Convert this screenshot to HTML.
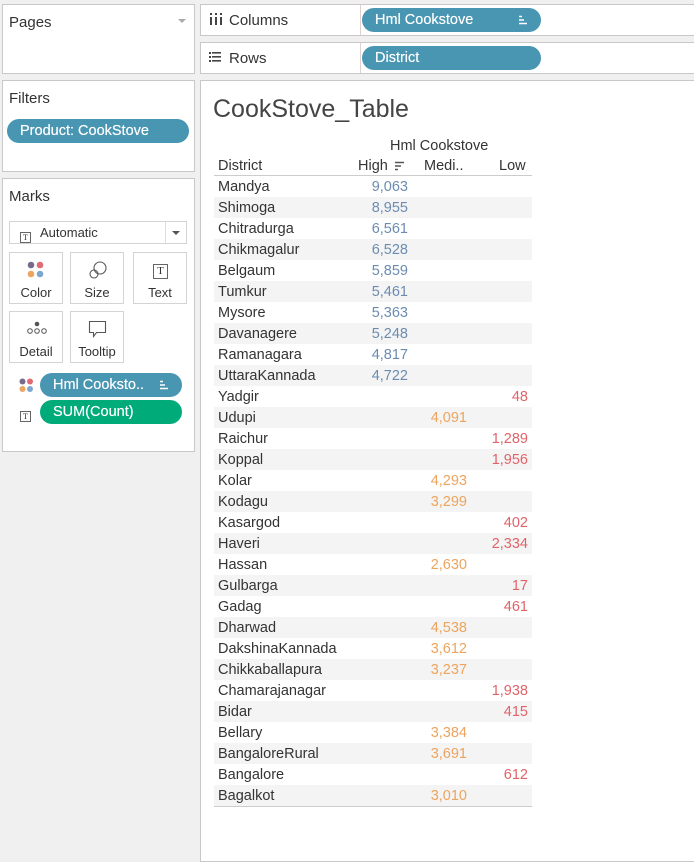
<!DOCTYPE html>
<html><head><meta charset="utf-8"><style>
*{box-sizing:border-box;margin:0;padding:0}
body{width:694px;height:860px;background:#f0f0f0;position:relative;font-family:"Liberation Sans",sans-serif;color:#333;overflow:hidden}
.box{position:absolute;background:#fff;border:1px solid #c8c8c8}
.t{position:absolute;font-size:14px;color:#333;white-space:nowrap}
.pill{position:absolute;height:24px;border-radius:12px;background:#4996b2;color:#fff;font-size:14.5px;line-height:25px;padding-left:13px;white-space:nowrap;text-shadow:0 0 0.4px #fff}
.btn{position:absolute;width:54px;height:52px;border:1px solid #d4d4d4;background:#fff;font-size:13px;text-align:center}
.btn > span{position:absolute;left:0;right:0;bottom:3px}
.row{position:absolute;left:214px;width:318px;height:21px;font-size:14.5px;line-height:22px}
.row .d{position:absolute;left:4px;color:#333}
.row .n{position:absolute;text-align:right}
.h{right:124px;color:#6b8cb0}.m{right:65px;color:#eda45e}.l{right:4px;color:#e0636a}
.sh{background:#f4f4f4}
.ti{display:inline-block;width:11px;height:11px;border:1px solid #666;font-size:8px;line-height:9px;text-align:center;font-family:"Liberation Serif",serif}
</style></head><body>
<div class="box" style="left:2px;top:4px;width:193px;height:70px"></div>
<div class="t" style="left:9px;top:14px;font-size:15px">Pages</div>
<div style="position:absolute;left:178px;top:19px;border-left:4px solid transparent;border-right:4px solid transparent;border-top:4px solid #aaa"></div>
<div class="box" style="left:2px;top:80px;width:193px;height:92px"></div>
<div class="t" style="left:9px;top:90px;font-size:15px">Filters</div>
<div class="pill" style="left:7px;top:119px;width:182px">Product: CookStove</div>
<div class="box" style="left:2px;top:178px;width:193px;height:274px"></div>
<div class="t" style="left:9px;top:188px;font-size:15px">Marks</div>
<div style="position:absolute;left:9px;top:221px;width:178px;height:23px;border:1px solid #d4d4d4;background:#fff"></div>
<div style="position:absolute;left:20px;top:227px"><span class="ti">T</span></div>
<div class="t" style="left:40px;top:225px;font-size:13px">Automatic</div>
<div style="position:absolute;left:165px;top:222px;width:1px;height:21px;background:#ddd"></div>
<div style="position:absolute;left:172px;top:231px;border-left:4px solid transparent;border-right:4px solid transparent;border-top:4px solid #555"></div>
<div class="btn" style="left:9px;top:252px"><svg style="position:absolute;left:17px;top:8px" width="18" height="18"><circle cx="4" cy="4" r="3.3" fill="#7a6a8a"/><circle cx="13" cy="4" r="3.3" fill="#e06b76"/><circle cx="4" cy="13" r="3.3" fill="#eda45e"/><circle cx="13" cy="13" r="3.3" fill="#7ea7d0"/></svg><span>Color</span></div>
<div class="btn" style="left:70px;top:252px"><svg style="position:absolute;left:17px;top:7px" width="20" height="20" fill="none" stroke="#555" stroke-width="1.1"><circle cx="12" cy="8" r="6"/><circle cx="6" cy="14" r="4"/></svg><span>Size</span></div>
<div class="btn" style="left:133px;top:252px"><div style="position:absolute;left:19px;top:9px"><div class="ti" style="width:15px;height:15px;line-height:13px;font-size:11px">T</div></div><span>Text</span></div>
<div class="btn" style="left:9px;top:311px"><svg style="position:absolute;left:15px;top:9px" width="24" height="14" fill="none" stroke="#555"><circle cx="12" cy="3" r="2.3" fill="#555" stroke="none"/><circle cx="5" cy="10" r="2.3"/><circle cx="12" cy="10" r="2.3"/><circle cx="19" cy="10" r="2.3"/></svg><span>Detail</span></div>
<div class="btn" style="left:70px;top:311px"><svg style="position:absolute;left:17px;top:8px" width="20" height="18" fill="none" stroke="#555" stroke-width="1.1"><path d="M1.5 1.5h16v11h-9l-3 4v-4h-4z"/></svg><span>Tooltip</span></div>
<svg style="position:absolute;left:19px;top:378px" width="15" height="15"><circle cx="3.5" cy="3.5" r="3" fill="#7a6a8a"/><circle cx="11" cy="3.5" r="3" fill="#e06b76"/><circle cx="3.5" cy="11" r="3" fill="#eda45e"/><circle cx="11" cy="11" r="3" fill="#7ea7d0"/></svg>
<div class="pill" style="left:40px;top:373px;width:142px">Hml Cooksto..<svg style="position:absolute;right:13px;top:7px" width="10" height="10" stroke="#fff" stroke-width="1.4"><path d="M1 1.5h3M1 5h5M1 8.5h8"/></svg></div>
<div style="position:absolute;left:20px;top:406px"><span class="ti">T</span></div>
<div class="pill" style="left:40px;top:400px;width:142px;background:#00ab7a">SUM(Count)</div>

<div class="box" style="left:200px;top:4px;width:500px;height:32px"></div>
<div style="position:absolute;left:360px;top:5px;width:1px;height:30px;background:#e0d0d0"></div>
<svg style="position:absolute;left:210px;top:13px" width="12" height="12" fill="#444"><rect x="0" y="4" width="2" height="8"/><rect x="5" y="4" width="2" height="8"/><rect x="10" y="4" width="2" height="8"/><rect x="0" y="0" width="2" height="2"/><rect x="5" y="0" width="2" height="2"/><rect x="10" y="0" width="2" height="2"/></svg>
<div class="t" style="left:229px;top:12px;font-size:15px">Columns</div>
<div class="pill" style="left:362px;top:8px;width:179px">Hml Cookstove<svg style="position:absolute;right:13px;top:7px" width="10" height="10" stroke="#fff" stroke-width="1.4"><path d="M1 1.5h3M1 5h5M1 8.5h8"/></svg></div>
<div class="box" style="left:200px;top:42px;width:500px;height:32px"></div>
<div style="position:absolute;left:360px;top:43px;width:1px;height:30px;background:#e0d0d0"></div>
<svg style="position:absolute;left:209px;top:52px" width="12" height="10" fill="#444"><rect x="0" y="0" width="2" height="2"/><rect x="0" y="4" width="2" height="2"/><rect x="0" y="8" width="2" height="2"/><rect x="3" y="0" width="9" height="1.6"/><rect x="3" y="4" width="9" height="1.6"/><rect x="3" y="8" width="9" height="1.6"/></svg>
<div class="t" style="left:229px;top:50px;font-size:15px">Rows</div>
<div class="pill" style="left:362px;top:46px;width:179px">District</div>

<div class="box" style="left:200px;top:80px;width:500px;height:782px"></div>
<div class="t" style="left:213px;top:95px;font-size:25px;color:#444">CookStove_Table</div>
<div class="t" style="left:390px;top:138px;font-size:14.5px">Hml Cookstove</div>
<div class="t" style="left:218px;top:158px;font-size:14.5px">District</div>
<div class="t" style="left:358px;top:158px;font-size:14.5px">High</div>
<svg style="position:absolute;left:395px;top:161px" width="10" height="10" stroke="#555" stroke-width="1.4"><path d="M0 1.5h9M0 5h6M0 8.5h3"/></svg>
<div class="t" style="left:424px;top:158px;font-size:14.5px">Medi..</div>
<div class="t" style="left:499px;top:158px;font-size:14.5px">Low</div>
<div style="position:absolute;left:214px;top:175px;width:318px;height:1px;background:#ccc"></div>
<div class="row" style="top:176px"><span class="d">Mandya</span><span class="n h">9,063</span></div>
<div class="row sh" style="top:197px"><span class="d">Shimoga</span><span class="n h">8,955</span></div>
<div class="row" style="top:218px"><span class="d">Chitradurga</span><span class="n h">6,561</span></div>
<div class="row sh" style="top:239px"><span class="d">Chikmagalur</span><span class="n h">6,528</span></div>
<div class="row" style="top:260px"><span class="d">Belgaum</span><span class="n h">5,859</span></div>
<div class="row sh" style="top:281px"><span class="d">Tumkur</span><span class="n h">5,461</span></div>
<div class="row" style="top:302px"><span class="d">Mysore</span><span class="n h">5,363</span></div>
<div class="row sh" style="top:323px"><span class="d">Davanagere</span><span class="n h">5,248</span></div>
<div class="row" style="top:344px"><span class="d">Ramanagara</span><span class="n h">4,817</span></div>
<div class="row sh" style="top:365px"><span class="d">UttaraKannada</span><span class="n h">4,722</span></div>
<div class="row" style="top:386px"><span class="d">Yadgir</span><span class="n l">48</span></div>
<div class="row sh" style="top:407px"><span class="d">Udupi</span><span class="n m">4,091</span></div>
<div class="row" style="top:428px"><span class="d">Raichur</span><span class="n l">1,289</span></div>
<div class="row sh" style="top:449px"><span class="d">Koppal</span><span class="n l">1,956</span></div>
<div class="row" style="top:470px"><span class="d">Kolar</span><span class="n m">4,293</span></div>
<div class="row sh" style="top:491px"><span class="d">Kodagu</span><span class="n m">3,299</span></div>
<div class="row" style="top:512px"><span class="d">Kasargod</span><span class="n l">402</span></div>
<div class="row sh" style="top:533px"><span class="d">Haveri</span><span class="n l">2,334</span></div>
<div class="row" style="top:554px"><span class="d">Hassan</span><span class="n m">2,630</span></div>
<div class="row sh" style="top:575px"><span class="d">Gulbarga</span><span class="n l">17</span></div>
<div class="row" style="top:596px"><span class="d">Gadag</span><span class="n l">461</span></div>
<div class="row sh" style="top:617px"><span class="d">Dharwad</span><span class="n m">4,538</span></div>
<div class="row" style="top:638px"><span class="d">DakshinaKannada</span><span class="n m">3,612</span></div>
<div class="row sh" style="top:659px"><span class="d">Chikkaballapura</span><span class="n m">3,237</span></div>
<div class="row" style="top:680px"><span class="d">Chamarajanagar</span><span class="n l">1,938</span></div>
<div class="row sh" style="top:701px"><span class="d">Bidar</span><span class="n l">415</span></div>
<div class="row" style="top:722px"><span class="d">Bellary</span><span class="n m">3,384</span></div>
<div class="row sh" style="top:743px"><span class="d">BangaloreRural</span><span class="n m">3,691</span></div>
<div class="row" style="top:764px"><span class="d">Bangalore</span><span class="n l">612</span></div>
<div class="row sh" style="top:785px"><span class="d">Bagalkot</span><span class="n m">3,010</span></div>
<div style="position:absolute;left:214px;top:806px;width:318px;height:1px;background:#ccc"></div>
</body></html>
